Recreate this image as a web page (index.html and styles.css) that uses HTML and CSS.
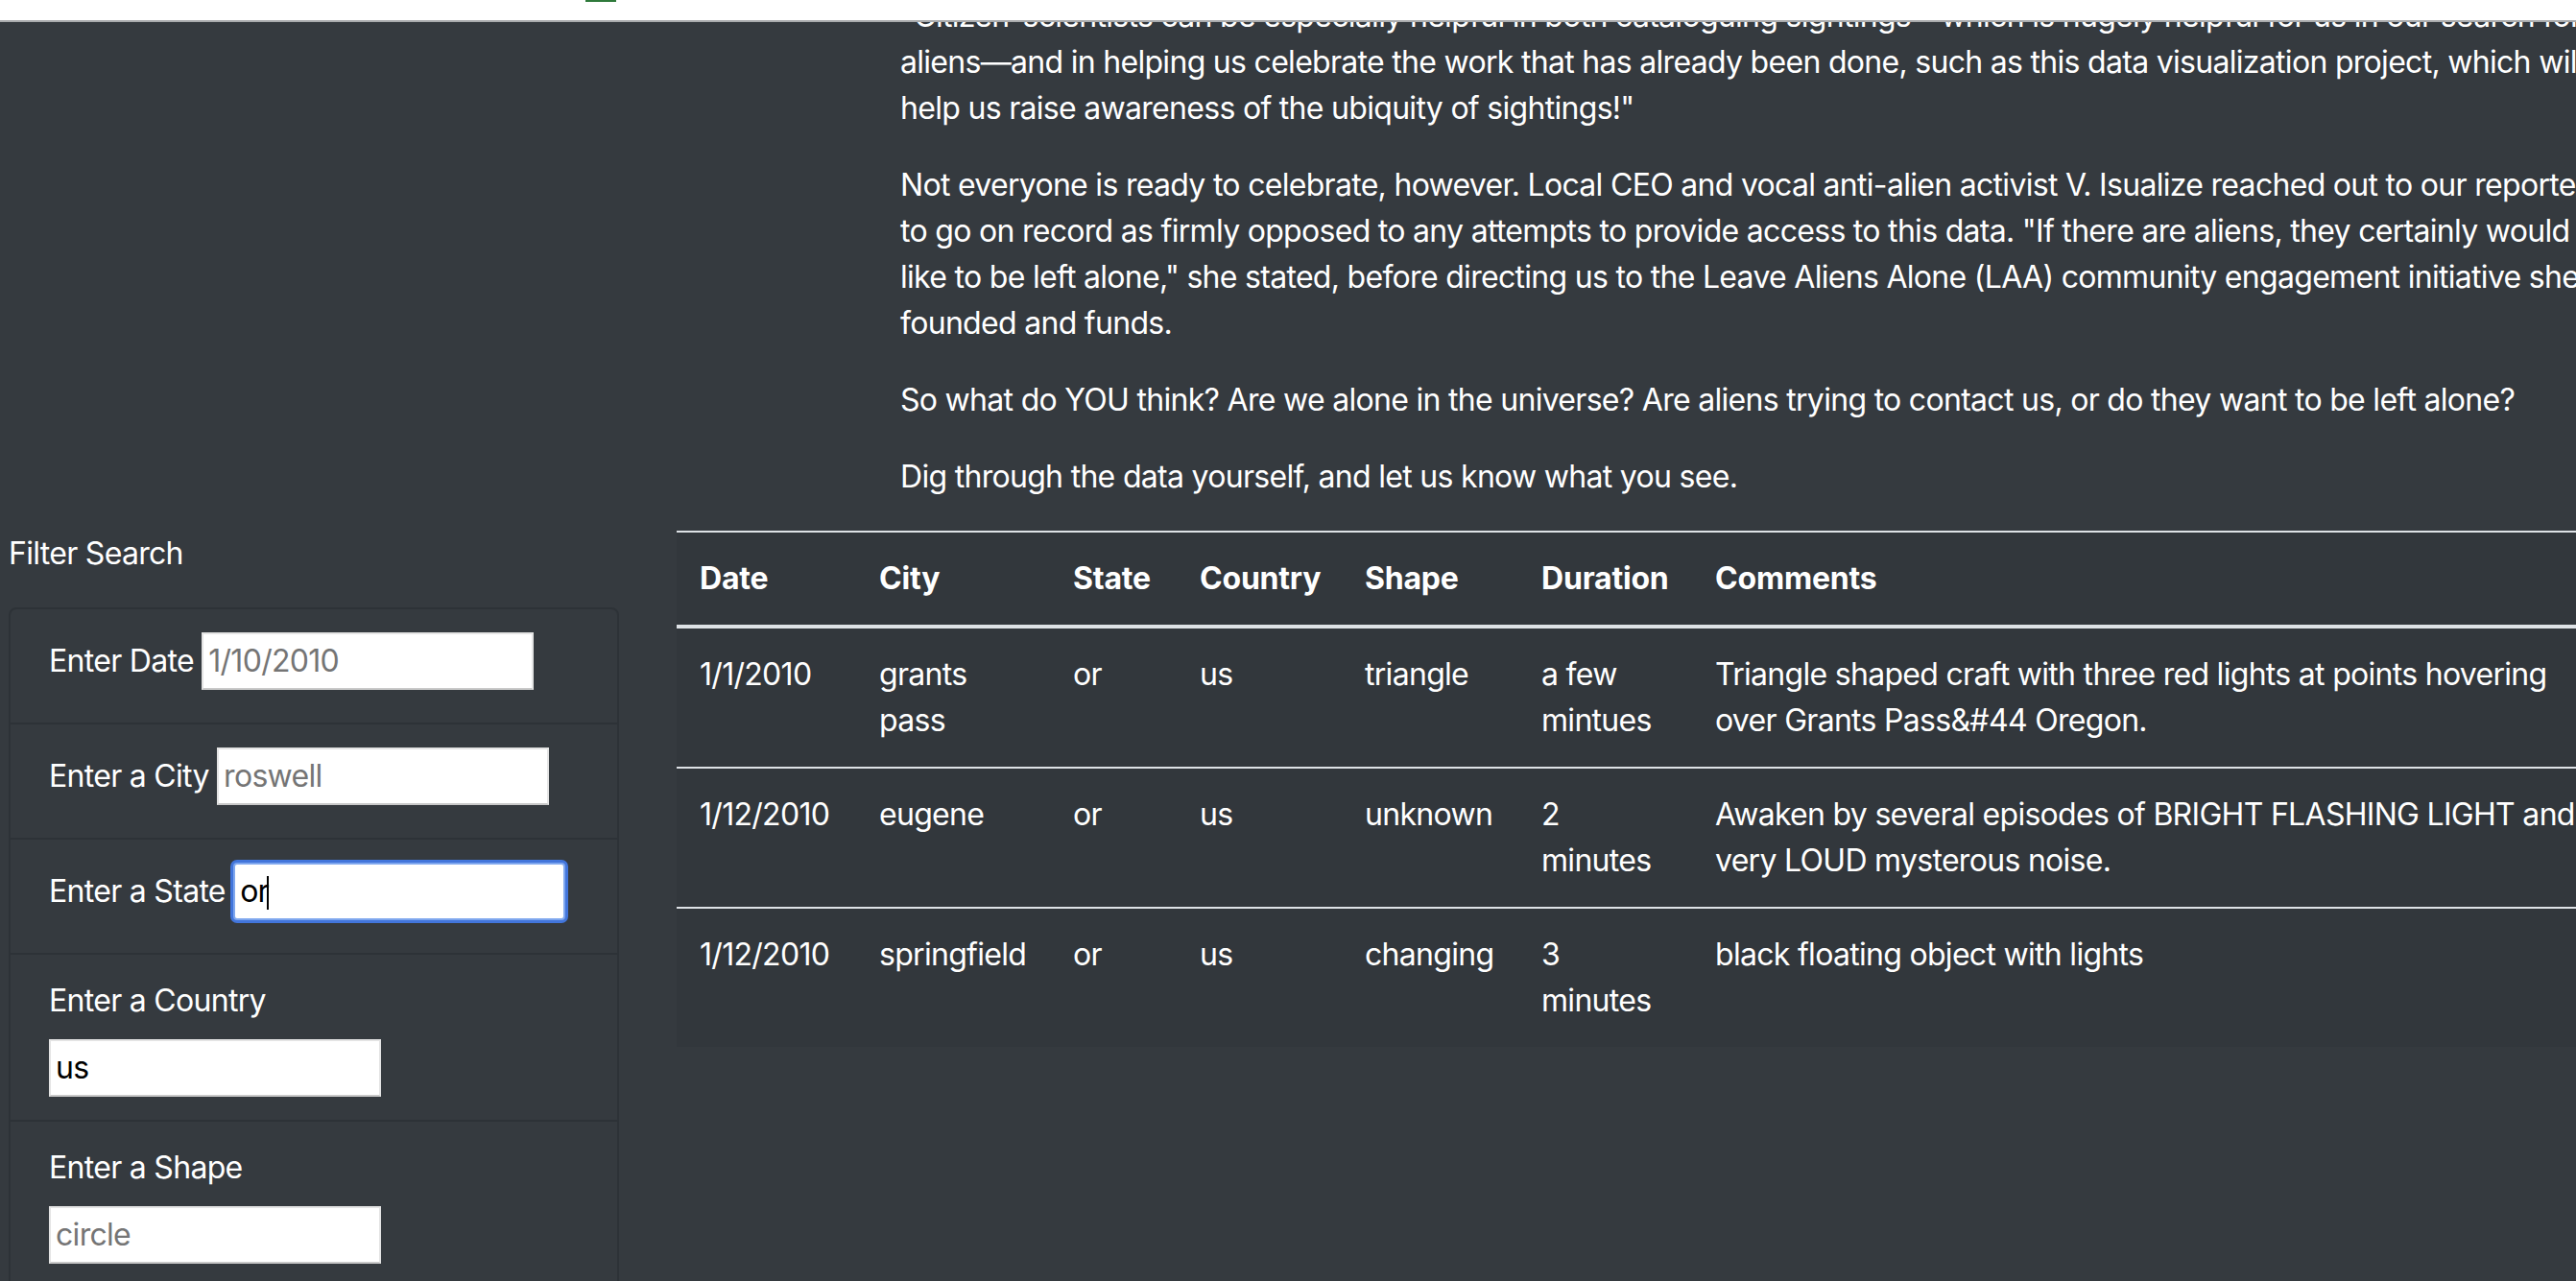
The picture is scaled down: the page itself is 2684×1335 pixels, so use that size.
FILE: index.html
```html
<!DOCTYPE html>
<html lang="en">
<head>
<meta charset="utf-8">
<title>UFO Sightings</title>
<link rel="stylesheet" href="styles.css">
</head>
<body>
<header class="topbar"><span class="topbar-mark"></span></header>
<main class="page">
  <article class="story">
    <p>"Citizen-scientists can be especially helpful in both cataloguing sightings—which is hugely helpful for us in our search for aliens—and in helping us celebrate the work that has already been done, such as this data visualization project, which will help us raise awareness of the ubiquity of sightings!"</p>
    <p>Not everyone is ready to celebrate, however. Local CEO and vocal anti-alien activist V. Isualize reached out to our reporters to go on record as firmly opposed to any attempts to provide access to this data. "If there are aliens, they certainly would like to be left alone," she stated, before directing us to the Leave Aliens Alone (LAA) community engagement initiative she founded and funds.</p>
    <p>So what do YOU think? Are we alone in the universe? Are aliens trying to contact us, or do they want to be left alone?</p>
    <p>Dig through the data yourself, and let us know what you see.</p>
  </article>
  <div class="workspace">
    <aside class="filters">
      <p class="filters-title">Filter Search</p>
      <form class="filter-list">
        <div class="filter-item"><label for="datetime">Enter Date</label> <input type="text" id="datetime" placeholder="1/10/2010"></div>
        <div class="filter-item"><label for="city">Enter a City</label> <input type="text" id="city" placeholder="roswell"></div>
        <div class="filter-item"><label for="state">Enter a State</label> <span class="field-wrap"><input type="text" id="state" class="is-focused" value="or"><span class="caret"></span></span></div>
        <div class="filter-item"><label for="country">Enter a Country</label> <input type="text" id="country" value="us"></div>
        <div class="filter-item"><label for="shape">Enter a Shape</label> <input type="text" id="shape" placeholder="circle"></div>
      </form>
    </aside>
    <section class="results">
      <table class="sightings">
        <colgroup>
          <col class="col-date"><col class="col-city"><col class="col-state"><col class="col-country"><col class="col-shape"><col class="col-duration"><col class="col-comments">
        </colgroup>
        <thead>
          <tr><th>Date</th><th>City</th><th>State</th><th>Country</th><th>Shape</th><th>Duration</th><th>Comments</th></tr>
        </thead>
        <tbody>
          <tr><td>1/1/2010</td><td>grants pass</td><td>or</td><td>us</td><td>triangle</td><td>a few mintues</td><td>Triangle shaped craft with three red lights at points hovering over Grants Pass&amp;#44 Oregon.</td></tr>
          <tr><td>1/12/2010</td><td>eugene</td><td>or</td><td>us</td><td>unknown</td><td>2 minutes</td><td>Awaken by several episodes of BRIGHT FLASHING LIGHT and very LOUD mysterous noise.</td></tr>
          <tr><td>1/12/2010</td><td>springfield</td><td>or</td><td>us</td><td>changing</td><td>3 minutes</td><td>black floating object with lights</td></tr>
        </tbody>
      </table>
    </section>
  </div>
</main>
</body>
</html>
```
FILE: styles.css
```css
html, body {
  margin: 0;
  overflow: hidden;
}
body {
  background: #353a3f;
  color: #fff;
  font-family: "Inter", "Noto Sans", sans-serif;
  font-size: 32px;
  line-height: 48px;
  letter-spacing: -0.7px;
}
.topbar {
  position: fixed;
  top: 0;
  left: 0;
  right: 0;
  height: 21px;
  background: #fff;
  border-bottom: 2px solid #a9abad;
  z-index: 10;
}
.topbar-mark {
  display: block;
  margin-left: 610px;
  width: 32px;
  height: 2px;
  background: #2f7a3b;
}
.page {
  margin-top: -7px;
}
.story {
  margin-left: 938px;
  width: 1785px;
}
.story p {
  margin: 0 0 32px;
}
.workspace {
  display: flex;
  align-items: flex-start;
  gap: 60px;
  padding-left: 9px;
}
.filters {
  flex: 0 0 636px;
}
.filters-title {
  margin: 0 0 32px;
}
.filter-list {
  margin: 0;
  border: 2px solid #2d3237;
  border-radius: 8px;
}
.filter-item {
  padding: 24px 40px;
}
.filter-item + .filter-item {
  border-top: 2px solid #2d3237;
}
.filter-item label {
  display: inline-block;
  margin-bottom: 16px;
}
.filter-item input {
  box-sizing: border-box;
  width: 346px;
  margin: 0;
  padding: 4px 5px;
  font: inherit;
  letter-spacing: inherit;
  line-height: 48px;
  color: #000;
  background: #fff;
  border: 2px solid #e4e4e4;
  border-bottom-color: #c9c9c9;
  border-radius: 0;
  outline: none;
}
.filter-item input::placeholder {
  color: #757575;
}
.filter-item input.is-focused {
  border-color: #7fa7ee;
  box-shadow: 0 0 0 3px #4275db;
  border-radius: 4px;
}
.field-wrap {
  position: relative;
  display: inline-block;
}
.caret {
  position: absolute;
  left: 35px;
  top: 14px;
  width: 2px;
  height: 35px;
  background: #000;
}
.results {
  flex: 0 0 2016px;
}
.sightings {
  width: 2016px;
  table-layout: fixed;
  border-collapse: collapse;
  background: #32373c;
}
.sightings th,
.sightings td {
  padding: 24px;
  text-align: left;
  vertical-align: top;
  border-top: 2px solid #dee2e6;
}
.sightings thead th {
  vertical-align: bottom;
  border-bottom: 4px solid #dee2e6;
  font-weight: 700;
  letter-spacing: -0.2px;
}
.col-date { width: 187px; }
.col-city { width: 202px; }
.col-state { width: 132px; }
.col-country { width: 172px; }
.col-shape { width: 184px; }
.col-duration { width: 181px; }
.col-comments { width: 958px; }
```
